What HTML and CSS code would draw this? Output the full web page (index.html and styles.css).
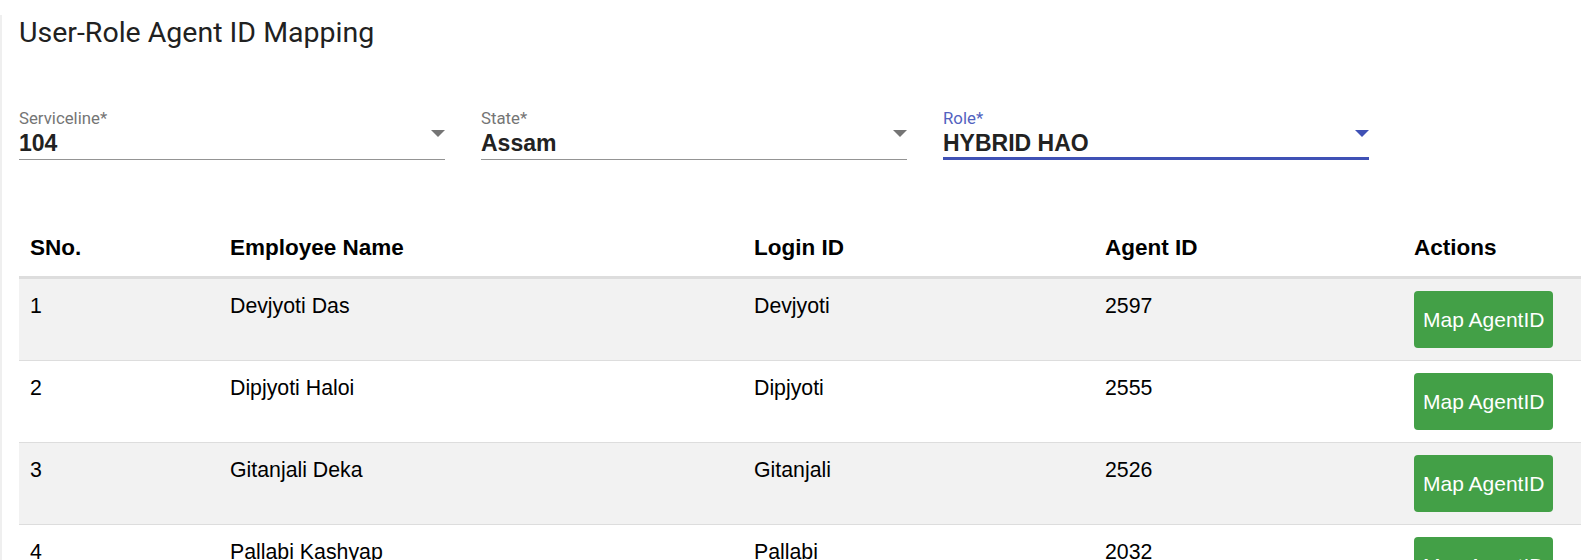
FILE: index.html
```html
<!DOCTYPE html>
<html>

<head>
  <meta name="viewport" content="width=device-width, initial-scale=1">
  <link rel="stylesheet" href="styles.css">
</head>

<body>
  <main class="page">
    <h2 class="page-title">User-Role Agent ID Mapping</h2>

    <div class="filters">
      <div class="field">
        <label class="field__label">Serviceline*</label>
        <div class="field__control">
          <span class="field__value">104</span>
          <span class="field__arrow"></span>
        </div>
      </div>
      <div class="field">
        <label class="field__label">State*</label>
        <div class="field__control">
          <span class="field__value">Assam</span>
          <span class="field__arrow"></span>
        </div>
      </div>
      <div class="field field--focused">
        <label class="field__label">Role*</label>
        <div class="field__control">
          <span class="field__value">HYBRID HAO</span>
          <span class="field__arrow"></span>
        </div>
      </div>
    </div>

    <table class="agents">
      <colgroup>
        <col class="col-sno">
        <col class="col-name">
        <col class="col-login">
        <col class="col-agent">
        <col>
      </colgroup>
      <thead>
        <tr>
          <th>SNo.</th>
          <th>Employee Name</th>
          <th>Login ID</th>
          <th>Agent ID</th>
          <th>Actions</th>
        </tr>
      </thead>
      <tbody>
        <tr>
          <td>1</td>
          <td>Devjyoti Das</td>
          <td>Devjyoti</td>
          <td>2597</td>
          <td><button class="btn-map">Map AgentID</button></td>
        </tr>
        <tr>
          <td>2</td>
          <td>Dipjyoti Haloi</td>
          <td>Dipjyoti</td>
          <td>2555</td>
          <td><button class="btn-map">Map AgentID</button></td>
        </tr>
        <tr>
          <td>3</td>
          <td>Gitanjali Deka</td>
          <td>Gitanjali</td>
          <td>2526</td>
          <td><button class="btn-map">Map AgentID</button></td>
        </tr>
        <tr>
          <td>4</td>
          <td>Pallabi Kashyap</td>
          <td>Pallabi</td>
          <td>2032</td>
          <td><button class="btn-map">Map AgentID</button></td>
        </tr>
      </tbody>
    </table>
  </main>
</body>

</html>
```

FILE: styles.css
```css
:root {
  --primary: #3f51b5;
  --label-color: #757575;
  --line-color: #949494;
  --row-border: #dddddd;
  --stripe: #f2f2f2;
  --green: #43a047;
}

html,
body {
  margin: 0;
  background: #ffffff;
  overflow: hidden;
}

.page {
  min-height: 100vh;
  border-left: 2px solid #efefef;
  padding-left: 17px;
  font-family: Roboto, "Liberation Sans", sans-serif;
}

.page-title {
  margin: 15px 0 0;
  font-size: 28.5px;
  line-height: 36px;
  font-weight: 400;
  color: #212121;
}

.filters {
  display: flex;
  gap: 36px;
  margin-top: 57px;
}

.field {
  width: 426px;
}

.field__label {
  display: block;
  font-size: 16.8px;
  line-height: 20px;
  color: var(--label-color);
}

.field__control {
  display: flex;
  align-items: flex-start;
  justify-content: space-between;
  margin-top: 2px;
  padding-bottom: 3px;
  border-bottom: 1px solid var(--line-color);
}

.field__value {
  font-family: "Liberation Sans", Arial, sans-serif;
  font-size: 23px;
  line-height: 26px;
  font-weight: 700;
  color: #222222;
}

.field__arrow {
  width: 0;
  height: 0;
  border-left: 7px solid transparent;
  border-right: 7px solid transparent;
  border-top: 7px solid var(--label-color);
}

.field--focused .field__label {
  color: #5262c0;
}

.field--focused .field__control {
  padding-bottom: 1px;
  border-bottom: 3px solid var(--primary);
}

.field--focused .field__arrow {
  border-top-color: var(--primary);
}

.agents {
  width: calc(100% + 2px);
  margin-top: 60px;
  border-collapse: collapse;
  table-layout: fixed;
  font-family: "Liberation Sans", Arial, sans-serif;
  color: #000000;
}

.col-sno {
  width: 200px;
}

.col-name {
  width: 524px;
}

.col-login {
  width: 351px;
}

.col-agent {
  width: 309px;
}

.agents th {
  padding: 12px 11px;
  font-size: 22.5px;
  line-height: 32px;
  text-align: left;
  vertical-align: bottom;
  border-bottom: 3px solid var(--row-border);
}

.agents td {
  padding: 12px 11px;
  font-size: 21.3px;
  line-height: 30px;
  vertical-align: top;
  border-bottom: 1px solid var(--row-border);
}

.agents tbody tr:nth-child(odd) {
  background: var(--stripe);
}

.btn-map {
  padding: 14px 9px;
  border: 0;
  border-radius: 4px;
  background: var(--green);
  color: #ffffff;
  font-family: "Liberation Sans", Arial, sans-serif;
  font-size: 21px;
  line-height: 29px;
}
```
